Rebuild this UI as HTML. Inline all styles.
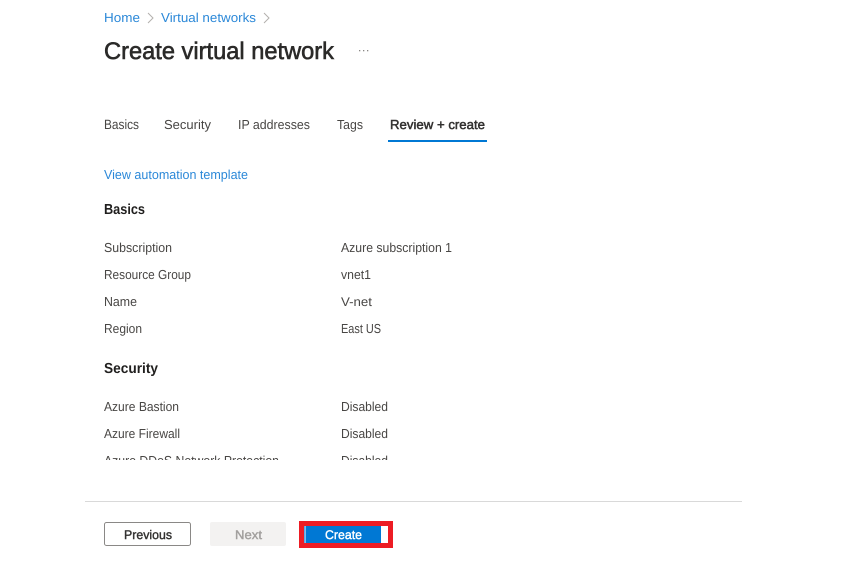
<!DOCTYPE html>
<html>
<head>
<meta charset="utf-8">
<style>
html,body{margin:0;padding:0;background:#fff;width:862px;height:566px;overflow:hidden}
svg{display:block;position:absolute;left:0;top:0}
text{font-family:"Liberation Sans",sans-serif;font-size:13px;fill:#484644;text-rendering:geometricPrecision}
.l{fill:#2b88d8}
.b{fill:#323130;stroke:#323130;stroke-width:.5px}
.h{font-size:14.500px;font-weight:bold;fill:#201f1e}
</style>
</head>
<body>
<svg width="862" height="566" viewBox="0 0 862 566" xmlns="http://www.w3.org/2000/svg">
<defs><clipPath id="c"><rect x="85" y="395" width="660" height="65"/></clipPath></defs>

<text class="l" x="104" y="22" textLength="36" lengthAdjust="spacingAndGlyphs">Home</text>
<path d="M148 13l5 5-5 5" fill="none" stroke="#b3b0ad" stroke-width="1"/>
<text class="l" x="161" y="22" textLength="95" lengthAdjust="spacingAndGlyphs">Virtual networks</text>
<path d="M264 13l5 5-5 5" fill="none" stroke="#b3b0ad" stroke-width="1"/>

<text class="b" x="104" y="59" style="font-size:24px;fill:#2b2a29;stroke:#2b2a29;stroke-width:.6px" textLength="230" lengthAdjust="spacingAndGlyphs">Create virtual network</text>
<g fill="#8a8886"><rect x="359" y="50" width="1.300" height="1.300"/><rect x="363" y="50" width="1.300" height="1.300"/><rect x="367" y="50" width="1.300" height="1.300"/></g>

<text x="104" y="129" style="font-size:13.500px" textLength="35" lengthAdjust="spacingAndGlyphs">Basics</text>
<text x="164" y="129" textLength="47" lengthAdjust="spacingAndGlyphs">Security</text>
<text x="238" y="129" textLength="72" lengthAdjust="spacingAndGlyphs">IP addresses</text>
<text x="337" y="129" textLength="26" lengthAdjust="spacingAndGlyphs">Tags</text>
<text class="b" x="390" y="129" textLength="95" lengthAdjust="spacingAndGlyphs">Review + create</text>
<rect x="388" y="140" width="99" height="2" fill="#0078d4"/>

<text class="l" x="104" y="179" textLength="144" lengthAdjust="spacingAndGlyphs">View automation template</text>

<text class="h" x="104" y="214" textLength="41" lengthAdjust="spacingAndGlyphs">Basics</text>

<text x="104" y="252" textLength="68" lengthAdjust="spacingAndGlyphs">Subscription</text>
<text x="341" y="252" textLength="111" lengthAdjust="spacingAndGlyphs">Azure subscription 1</text>
<text x="104" y="279" textLength="87" lengthAdjust="spacingAndGlyphs">Resource Group</text>
<text x="341" y="279" textLength="30" lengthAdjust="spacingAndGlyphs">vnet1</text>
<text x="104" y="306" textLength="33" lengthAdjust="spacingAndGlyphs">Name</text>
<text x="341" y="306" style="font-size:12.500px" textLength="31" lengthAdjust="spacingAndGlyphs">V-net</text>
<text x="104" y="333" textLength="38" lengthAdjust="spacingAndGlyphs">Region</text>
<text transform="translate(341 333) scale(.84 1)" x="0" y="0">East US</text>

<text class="h" x="104" y="373" textLength="54" lengthAdjust="spacingAndGlyphs">Security</text>

<g clip-path="url(#c)">
<text x="104" y="411" textLength="75" lengthAdjust="spacingAndGlyphs">Azure Bastion</text>
<text x="341" y="411" textLength="47" lengthAdjust="spacingAndGlyphs">Disabled</text>
<text x="104" y="438" textLength="76" lengthAdjust="spacingAndGlyphs">Azure Firewall</text>
<text x="341" y="438" textLength="47" lengthAdjust="spacingAndGlyphs">Disabled</text>
<text x="104" y="465" textLength="175" lengthAdjust="spacingAndGlyphs">Azure DDoS Network Protection</text>
<text x="341" y="465" textLength="47" lengthAdjust="spacingAndGlyphs">Disabled</text>
</g>

<rect x="85" y="501" width="657" height="1" fill="#d9d9d9"/>

<rect x="104.500" y="522.500" width="86" height="23" rx="2" fill="#fff" stroke="#8a8886"/>
<text class="b" x="124" y="539" style="font-size:12.500px;stroke-width:.4px" textLength="48" lengthAdjust="spacingAndGlyphs">Previous</text>

<rect x="210" y="522" width="76" height="24" rx="2" fill="#f3f2f1"/>
<text class="b" x="235" y="539" style="font-size:12.500px;fill:#a19f9d;stroke:#a19f9d;stroke-width:.4px" textLength="27" lengthAdjust="spacingAndGlyphs">Next</text>

<rect x="299" y="521" width="94" height="27" fill="#ed1c24"/>
<rect x="304" y="526" width="84" height="17" fill="#fff"/>
<rect x="304" y="526" width="1" height="17" fill="#5ba9e6"/>
<rect x="305.500" y="526" width="75.500" height="17" fill="#0078d4"/>
<text class="b" x="325" y="539" style="font-size:12.500px;fill:#fff;stroke:#fff;stroke-width:.4px" textLength="37" lengthAdjust="spacingAndGlyphs">Create</text>
</svg>
</body>
</html>
